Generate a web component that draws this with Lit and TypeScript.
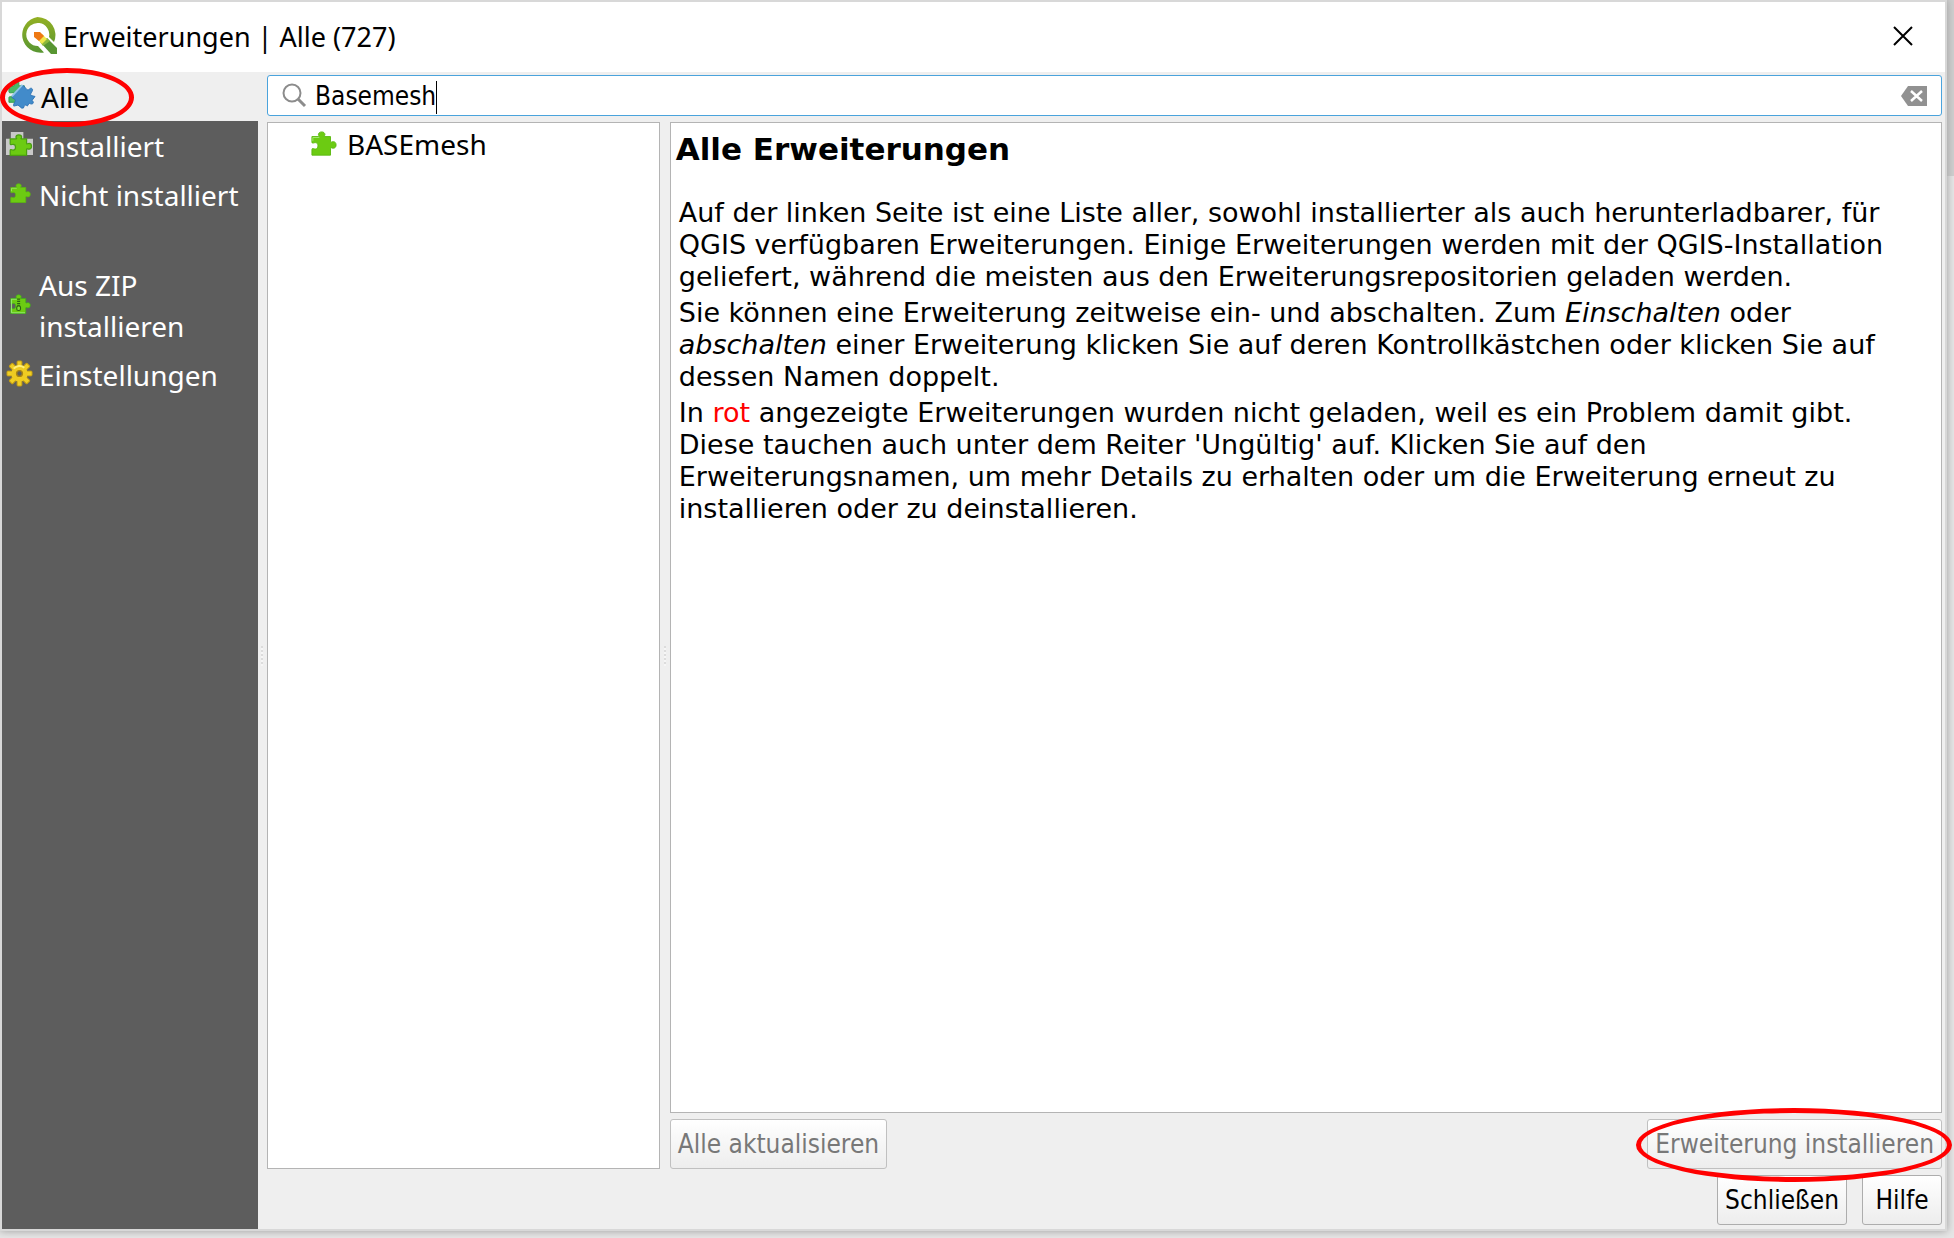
import { LitElement, html, css, svg } from "lit";
import { customElement, property, state } from "lit/decorators.js";

type IconName = "all" | "installed" | "plugin" | "zip" | "gear";

const PIECE =
  "M1 5 H8 C10 5 8 4 8 3 C8 1 9.500 0 11.500 0 C13.500 0 15 1 15 3 C15 4 13 5 15 5 H21 V10 C21 12 22 10.500 24 10.500 C26 10.500 27 12 27 14 C27 16 26 17.500 24 17.500 C22 17.500 21 16 21 18 V25 H1 V19 C1 17 3 18.500 4.500 18.500 C6.500 18.500 7.500 17 7.500 15 C7.500 13 6.500 11.500 4.500 11.500 C3 11.500 1 13 1 11 Z";

const icons = {
  plugin: svg`<path d=${PIECE} fill="#6ccb12" stroke="#5bb90f" stroke-width="1"/>
    <path d="M2 10V6H9" fill="none" stroke="#a5e872" stroke-width="1"/>`,
  installed: svg`<path d="M5 0H18V7H28V24H0V7H5Z" fill="#c9c9c9"/>
    <g transform="translate(3.500 3) scale(.85)"><path d=${PIECE} fill="#6ccb12" stroke="#4a9e12" stroke-width="1.500"/></g>`,
  zip: svg`<path d=${PIECE} fill="#6ccb12" stroke="#3fae1c" stroke-width="1"/>
    <path d="M2 24V6H9M2 24H20" fill="none" stroke="#8fe86a" stroke-width="1.500"/>
    <path d="M11.500 5V16" stroke="#2b6410" stroke-width="4" stroke-dasharray="1.500 1.500"/>
    <rect x="9" y="15" width="5" height="6" rx="2" fill="#7fdc33" stroke="#2b6410" stroke-width="1.500"/>`,
  all: svg`<path d="M1 3H6C8 3 5 -2 9 -2C13 -2 10 3 12 3H17L18 20H1V15C1 13 7 16 7 12C7 8 1 12 1 9Z" fill="#4cb866" stroke="#2f9a48"/>
    <path d="M4 15 L15 3 C17 2 18 6 20 7 C22 8 23 4 25 6 C27 8 22 11 24 13 L28 14 L25 18 C28 21 25 23 22 21 L20 24 C18 22 17 23 16 26 C13 27 12 23 10 23 L6 24 C5 21 9 19 7 17Z" fill="#428bca" stroke="#2f74b5"/>
    <path d="M4 14 L15 2" stroke="#8ec3ea" stroke-width="2"/>`,
  gear: svg`<g transform="translate(14 13)">
    ${[0, 45, 90, 135].map((a) => svg`<rect x="-2.500" y="-13" width="5" height="26" rx="1" fill="#f0cf24" stroke="#c39c12" stroke-width="1" transform="rotate(${a})"/>`)}
    <circle r="8.500" fill="#eecb22"/><path d="M-6 -5A8 8 0 0 1 5 -6" fill="none" stroke="#fff07a" stroke-width="2"/>
    <circle r="3" fill="#5d5d5d" stroke="#a98512" stroke-width="1.500"/></g>`,
};

@customElement("app-icon")
export class AppIcon extends LitElement {
  @property() name: IconName = "plugin";
  static styles = css`
    :host { display: block; flex: none; }
    svg { display: block; width: 100%; height: 100%; overflow: visible; }
  `;
  render() {
    return html`<svg viewBox="0 0 28 26" aria-hidden="true">${icons[this.name]}</svg>`;
  }
}

@customElement("app-root")
export class AppRoot extends LitElement {
  @state() private active = "Alle";
  @state() private query = "Basemesh";

  static styles = css`
    * { box-sizing: border-box; }
    :host {
      display: flex;
      min-height: 100vh;
      box-sizing: border-box;
      padding: 0 7px 7px 0;
      background: linear-gradient(#cfcfcf 176px, #e6e6e6 176px);
      color: #000;
      font-family: "DejaVu Sans Condensed", Tahoma, sans-serif;
      font-size: 26px;
    }
    h1, h2, p, ul { margin: 0; padding: 0; }
    button, input { font: inherit; color: inherit; margin: 0; }
    .window {
      flex: 1;
      min-width: 0;
      display: flex;
      flex-direction: column;
      background: #efefef;
      border: 2px solid #d8d8d8;
      box-shadow: 0 0 8px #9c9c9c;
    }
    .titlebar {
      display: flex;
      align-items: center;
      height: 70px;
      padding: 0 29px 0 16px;
      background: #fff;
    }
    .logo { width: 40px; height: 40px; margin-right: 5px; }
    .title, .tab, .item { font-family: "Noto Sans", "Segoe UI", sans-serif; }
    .title { flex: 1; font-size: 27px; font-weight: 400; line-height: 38px; }
    .close { width: 26px; height: 26px; padding: 0; border: 0; background: none; }
    .close svg { display: block; }
    .body { flex: 1; display: flex; min-height: 0; }
    .sidebar { width: 256px; flex: none; background: #5d5d5d; color: #fff; }
    .tab {
      display: flex;
      align-items: center;
      gap: 6px;
      width: 100%;
      min-height: 49px;
      padding: 5px 2px 3px 4px;
      border: 0;
      background: none;
      text-align: left;
      font-size: 28px;
      line-height: 41px;
    }
    .tab app-icon { width: 27px; height: 27px; margin-bottom: 4px; }
    .tab.small app-icon { width: 21px; height: 21px; margin: 0 2px 4px 4px; }
    .tab.active { padding-left: 6px; background: #efefef; color: #000; }
    .tab.spaced { margin-top: 41px; }
    .main {
      flex: 1;
      min-width: 0;
      display: flex;
      flex-direction: column;
      gap: 6px;
      padding: 3px 3px 4px 9px;
    }
    .search {
      display: flex;
      align-items: center;
      height: 41px;
      padding: 0 14px 0 13px;
      border: 1px solid #4aa3dc;
      border-radius: 3px;
      background: #fff;
    }
    .glass { width: 26px; height: 26px; margin-right: 8px; }
    .field { position: relative; flex: 1; display: flex; }
    .search input { width: 100%; padding: 0; border: 0; outline: 0; background: none; }
    .caret { position: absolute; left: 0; top: 0; white-space: pre; pointer-events: none; color: transparent; border-right: 1px solid #000; line-height: 33px; }
    .clear { width: 26px; height: 20px; padding: 0; border: 0; background: none; }
    .clear svg { display: block; }
    .panels { flex: 1; display: grid; grid-template-columns: 393fr 1273fr; gap: 10px; min-height: 0; }
    .list { background: #fff; border: 1px solid #b4b4b4; list-style: none; }
    .item { display: flex; align-items: center; gap: 10px; height: 41px; padding-left: 43px; font-size: 28px; }
    .item app-icon { width: 26px; height: 26px; }
    .right { display: flex; flex-direction: column; gap: 6px; min-width: 0; }
    .details {
      flex: 1;
      padding: 8px 16px 8px 5px;
      background: #fff;
      border: 1px solid #b4b4b4;
      font-family: "DejaVu Sans", Verdana, sans-serif;
      font-size: 27px;
      line-height: 32px;
    }
    .details h2 { font-size: 31px; line-height: 36px; margin-bottom: 30px; }
    .details p { margin: 0 0 4px 3px; }
    .red { color: #f00; }
    .actions, .footer { display: flex; justify-content: space-between; }
    .footer { justify-content: flex-end; gap: 15px; }
    .btn {
      height: 50px;
      padding: 0 7px;
      border: 1px solid #adadad;
      border-radius: 3px;
      background: linear-gradient(#fff, #ededed);
    }
    .btn:disabled { color: #787878; border-color: #c0c0c0; }
    .footer .btn { min-width: 80px; }
    .marked { position: relative; }
    .mark { position: absolute; pointer-events: none; border: 5px solid #f00; border-radius: 50%; }
    .mark.tabmark { left: -2px; top: -4px; width: 134px; height: 59px; }
    .mark.installmark { left: -11px; right: -10px; top: -11px; bottom: -13px; }
    .grip { position: absolute; left: -6px; top: 50%; width: 2px; height: 20px; background: repeating-linear-gradient(#dcdcdc 0 2px, #f6f6f6 2px 4px); }
  `;

  private tab(label: string, icon: IconName, extra = "") {
    const on = this.active === label;
    return html`<button class="tab ${extra} ${on ? "active" : ""}" aria-pressed=${on} @click=${() => (this.active = label)}>
      <app-icon name=${icon}></app-icon><span>${label}</span>
    </button>`;
  }

  render() {
    return html`
      <div class="window">
        <header class="titlebar">
          <svg class="logo" viewBox="0 0 40 40" aria-hidden="true">
            <defs>
              <linearGradient id="ring" x1="0" y1="0" x2="0" y2="1"><stop offset="0" stop-color="#93b023"/><stop offset="1" stop-color="#589632"/></linearGradient>
            </defs>
            <path fill="url(#ring)" fill-rule="evenodd" d="M19.500 0A18.500 18 0 1 0 26 35.500L20 29A11.500 11.500 0 1 1 31 20L36 25A18.500 18 0 0 0 19.500 0Z"/>
            <path d="M23 26L29 21L39 31V37H33Z" fill="#589632"/>
            <path d="M29 21L32 24L25 29L22 25Z" fill="#8cb83a"/>
            <path d="M19 22L24 17L29 22L24 27Z" fill="#f0e64a"/>
            <path d="M16 15H22L26 19L21 24L16 20Z" fill="#ee7913"/>
          </svg>
          <h1 class="title">Erweiterungen | ${this.active} (727)</h1>
          <button class="close" aria-label="Fenster schließen">
            <svg viewBox="0 0 26 26"><path d="M4 3L22 21M22 3L4 21" stroke="#000" stroke-width="2"/></svg>
          </button>
        </header>
        <div class="body">
          <nav class="sidebar">
            <div class="marked">${this.tab("Alle", "all")}<div class="mark tabmark"></div></div>
            ${this.tab("Installiert", "installed")}
            ${this.tab("Nicht installiert", "plugin", "small")}
            ${this.tab("Aus ZIP installieren", "zip", "small spaced")}
            ${this.tab("Einstellungen", "gear")}
          </nav>
          <main class="main">
            <div class="search">
              <svg class="glass" viewBox="0 0 26 26" aria-hidden="true"><circle cx="11" cy="10" r="8.500" fill="none" stroke="#8c8c8c" stroke-width="2"/><path d="M17 16L24 23" stroke="#8c8c8c" stroke-width="3"/></svg>
              <div class="field">
                <input aria-label="Suchen" .value=${this.query} @input=${(e: Event) => (this.query = (e.target as HTMLInputElement).value)} />
                <span class="caret" aria-hidden="true">${this.query}</span>
              </div>
              <button class="clear" aria-label="Suche leeren" @click=${() => (this.query = "")}>
                <svg viewBox="0 0 26 20"><path d="M0 10L7 0H26V20H7Z" fill="#919191"/><path d="M10 5L21 15M21 5L10 15" stroke="#fff" stroke-width="2.500"/></svg>
              </button>
            </div>
            <div class="panels marked">
              <div class="grip"></div>
              <ul class="list"><li class="item"><app-icon name="plugin"></app-icon><span>BASEmesh</span></li></ul>
              <div class="right marked">
                <div class="grip"></div>
                <article class="details">
                  <h2>Alle Erweiterungen</h2>
                  <p>Auf der linken Seite ist eine Liste aller, sowohl installierter als auch herunterladbarer, für QGIS verfügbaren Erweiterungen. Einige Erweiterungen werden mit der QGIS-Installation geliefert, während die meisten aus den Erweiterungsrepositorien geladen werden.</p>
                  <p>Sie können eine Erweiterung zeitweise ein- und abschalten. Zum <i>Einschalten</i> oder <i>abschalten</i> einer Erweiterung klicken Sie auf deren Kontrollkästchen oder klicken Sie auf dessen Namen doppelt.</p>
                  <p>In <span class="red">rot</span> angezeigte Erweiterungen wurden nicht geladen, weil es ein Problem damit gibt. Diese tauchen auch unter dem Reiter 'Ungültig' auf. Klicken Sie auf den Erweiterungsnamen, um mehr Details zu erhalten oder um die Erweiterung erneut zu installieren oder zu deinstallieren.</p>
                </article>
                <div class="actions">
                  <button class="btn" disabled>Alle aktualisieren</button>
                  <div class="marked"><button class="btn" disabled>Erweiterung installieren</button><div class="mark installmark"></div></div>
                </div>
              </div>
            </div>
            <footer class="footer">
              <button class="btn">Schließen</button>
              <button class="btn">Hilfe</button>
            </footer>
          </main>
        </div>
      </div>
    `;
  }
}
